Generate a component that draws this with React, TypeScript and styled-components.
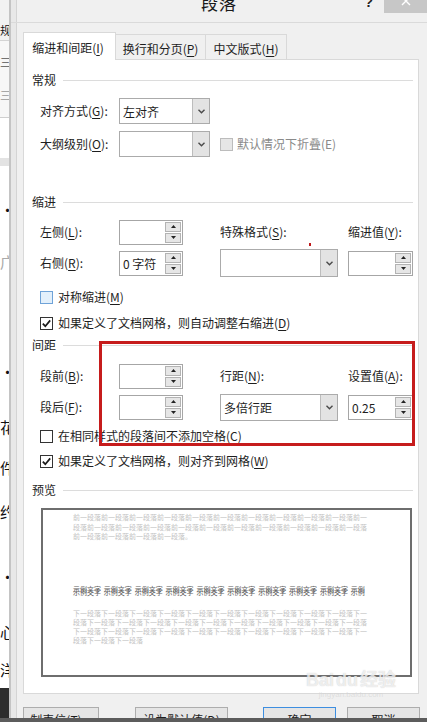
import React from "react";
import styled, { createGlobalStyle, css } from "styled-components";

const FONT = `"Noto Sans CJK SC", "Noto Sans", "Liberation Sans", sans-serif`;

const GlobalStyle = createGlobalStyle`
  * { box-sizing: border-box; }
  html, body { margin: 0; padding: 0; background: #f0f0f0; }
  body { font-family: ${FONT}; font-size: 12px; color: #1e1e1e; }
`;

const Root = styled.div`
  position: relative;
  width: 427px;
  height: 722px;
  overflow: hidden;
  display: grid;
  grid-template-rows: 718px 4px;
`;

const Main = styled.div`
  display: flex;
  overflow: hidden;
  min-height: 0;
`;

const BottomBand = styled.div`
  background: #5c5c5c;
`;

/* ---------- background document strip ---------- */
const DocStrip = styled.div`
  width: 9px;
  flex: none;
  display: flex;
  flex-direction: column;
  overflow: hidden;
`;

const DocSeg = styled.div<{ $h: number; $bg: string; $border?: string }>`
  flex: none;
  height: ${(p) => p.$h}px;
  background: ${(p) => p.$bg};
  border-bottom: ${(p) => (p.$border ? `1px solid ${p.$border}` : "0")};
  display: flex;
  flex-direction: column;
  overflow: hidden;
`;

const DocLine = styled.div<{ $mt: number; $size?: number; $color?: string }>`
  flex: none;
  margin-top: ${(p) => p.$mt}px;
  height: 20px;
  line-height: 20px;
  font-size: ${(p) => p.$size ?? 15}px;
  color: ${(p) => p.$color ?? "#111"};
  white-space: nowrap;
  letter-spacing: -2px;
`;

/* ---------- dialog frame ---------- */
const Dialog = styled.div`
  flex: 1;
  display: flex;
  flex-direction: column;
  background: #f0f0f0;
  border-left: 2px solid #c4c4c4;
  box-shadow: inset 5px 0 0 #e8e8e8, inset 6px 0 0 #d4d4d4;
  min-width: 0;
`;

const TitleBar = styled.div`
  flex: none;
  height: 23px;
  border-bottom: 1px solid #dadada;
  display: grid;
  grid-template-columns: 1fr auto 1fr;
  align-items: start;
  overflow: hidden;
`;

const Title = styled.div`
  grid-column: 2;
  font-size: 17px;
  line-height: 18px;
  margin-top: -6px;
  color: #1a1a1a;
  letter-spacing: 1px;
`;

const TitleControls = styled.div`
  grid-column: 3;
  justify-self: end;
  display: flex;
  align-items: flex-start;
`;

const HelpMark = styled.div`
  font-family: "Liberation Sans", sans-serif;
  font-size: 14px;
  font-weight: bold;
  line-height: 14px;
  margin-top: -5px;
  margin-right: 11px;
  color: #222;
`;

const CloseButton = styled.div`
  width: 43px;
  height: 13px;
  background: #c7c7c7;
  display: flex;
  justify-content: center;
  align-items: flex-start;
  overflow: hidden;
`;

const Body = styled.div`
  flex: 1;
  display: flex;
  flex-direction: column;
  padding: 9px 8px 0 12px;
`;

/* ---------- tabs ---------- */
const TabRow = styled.div`
  display: flex;
  align-items: flex-end;
  height: 27px;
`;

const Tab = styled.div<{ $active?: boolean; $w: number }>`
  width: ${(p) => p.$w}px;
  display: flex;
  justify-content: center;
  align-items: center;
  padding-top: 3px;
  border: 1px solid #d9d9d9;
  border-bottom: 0;
  white-space: nowrap;
  & + & {
    margin-left: -1px;
  }
  ${(p) =>
    p.$active
      ? css`
          height: 28px;
          margin-bottom: -1px;
          background: #fff;
          position: relative;
          z-index: 2;
          padding-top: 1px;
          padding-right: 3px;
        `
      : css`
          height: 25px;
          background: #f0f0f0;
        `}
`;

const Mn = styled.span`
  text-decoration: underline;
  text-underline-offset: 2px;
  text-decoration-thickness: 1px;
`;

/* ---------- panel ---------- */
const Panel = styled.div`
  height: 635px;
  border: 1px solid #d9d9d9;
  background: #fff;
  display: flex;
  flex-direction: column;
`;

const SectionHeader = styled.div<{ $mt: number }>`
  display: flex;
  align-items: center;
  gap: 7px;
  height: 16px;
  line-height: 16px;
  margin-top: ${(p) => p.$mt}px;
  padding: 0 5px 0 8px;
  color: #1e1e1e;
  &::after {
    content: "";
    flex: 1;
    height: 1px;
    background: #dcdcdc;
  }
`;

const GeneralRow = styled.div<{ $mt: number }>`
  display: grid;
  grid-template-columns: 79px 91px 10px auto;
  align-items: center;
  height: 26px;
  margin-top: ${(p) => p.$mt}px;
  padding-left: 16px;
`;

const FieldGrid = styled.div<{ $mt: number }>`
  display: grid;
  grid-template-columns: 79px 64px 37px 118px 10px 65px;
  grid-template-rows: 26px 26px;
  row-gap: 5px;
  align-items: center;
  margin-top: ${(p) => p.$mt}px;
  padding-left: 16px;
`;

const Cell = styled.div<{ $col: number; $row?: number }>`
  grid-column: ${(p) => p.$col};
  grid-row: ${(p) => p.$row ?? "auto"};
  white-space: nowrap;
  display: flex;
  align-items: center;
`;

const Label = styled.span<{ $disabled?: boolean }>`
  white-space: nowrap;
  line-height: 16px;
  color: ${(p) => (p.$disabled ? "#8a8a8a" : "#1e1e1e")};
`;

const SelectBox = styled.div<{ $w: number; $h?: number }>`
  width: ${(p) => p.$w}px;
  height: ${(p) => p.$h ?? 26}px;
  border: 1px solid #ababab;
  background: #fff;
  display: flex;
  align-items: stretch;
`;

const SelectText = styled.div`
  flex: 1;
  display: flex;
  align-items: center;
  padding-left: 3px;
  white-space: nowrap;
`;

const SelectArrow = styled.div`
  width: 17px;
  flex: none;
  background: #e3e3e3;
  border-left: 1px solid #bdbdbd;
  display: flex;
  align-items: center;
  justify-content: center;
`;

const SpinBox = styled.div<{ $w: number }>`
  width: ${(p) => p.$w}px;
  height: 25px;
  border: 1px solid #a6a6a6;
  background: #fff;
  display: flex;
  padding: 1px;
`;

const SpinText = styled.div`
  flex: 1;
  display: flex;
  align-items: center;
  padding-left: 2px;
  white-space: nowrap;
`;

const SpinButtons = styled.div`
  width: 16px;
  flex: none;
  display: flex;
  flex-direction: column;
  gap: 1px;
`;

const SpinBtn = styled.div`
  flex: 1;
  background: #e6e6e6;
  border: 1px solid #b3b3b3;
  display: flex;
  align-items: center;
  justify-content: center;
`;

const CheckRow = styled.div<{ $mt: number }>`
  display: flex;
  align-items: center;
  gap: 5px;
  height: 18px;
  margin-top: ${(p) => p.$mt}px;
  padding-left: 16px;
  white-space: nowrap;
`;

type BoxKind = "checked" | "unchecked" | "hover" | "disabled";

const Box = styled.div<{ $kind: BoxKind }>`
  width: 13px;
  height: 13px;
  flex: none;
  display: flex;
  align-items: center;
  justify-content: center;
  ${(p) =>
    p.$kind === "hover"
      ? css`
          border: 1px solid #6fa3d8;
          background: #e3f0fb;
        `
      : p.$kind === "disabled"
      ? css`
          border: 1px solid #bcbcbc;
          background: #e6e6e6;
        `
      : css`
          border: 1px solid #333;
          background: #fff;
        `}
`;

/* ---------- preview ---------- */
const PreviewBox = styled.div`
  margin: 10px 0 0 17px;
  width: 371px;
  height: 169px;
  border: 2px solid #6e6e6e;
  background: #fff;
  padding: 3px 0 0 30px;
  display: flex;
  flex-direction: column;
  overflow: hidden;
`;

const PreviewPara = styled.div<{ $mt?: number; $lh: number; $color: string }>`
  margin-top: ${(p) => p.$mt ?? 0}px;
  font-size: 7px;
  line-height: ${(p) => p.$lh}px;
  color: ${(p) => p.$color};
  white-space: nowrap;
  word-spacing: 1.3px;
`;

/* ---------- bottom buttons ---------- */
const ButtonRow = styled.div`
  display: flex;
  margin-top: 13px;
`;

const Button = styled.div<{ $w: number; $ml: number; $primary?: boolean }>`
  width: ${(p) => p.$w}px;
  margin-left: ${(p) => p.$ml}px;
  height: 24px;
  flex: none;
  border: 1px solid ${(p) => (p.$primary ? "#3d8ee0" : "#adadad")};
  background: #e5e5e5;
  display: flex;
  align-items: center;
  justify-content: center;
  white-space: nowrap;
`;

/* ---------- overlays ---------- */
const RedFrame = styled.div`
  position: absolute;
  left: 99px;
  top: 341px;
  width: 316px;
  height: 105px;
  border: 3px solid #c61c1c;
  pointer-events: none;
`;

const RedDot = styled.div`
  position: absolute;
  left: 309px;
  top: 243px;
  width: 2px;
  height: 3px;
  background: #c0181b;
`;

const Watermark = styled.div`
  position: absolute;
  left: 306px;
  top: 670px;
  display: flex;
  flex-direction: column;
  align-items: center;
  pointer-events: none;
`;

const WatermarkMain = styled.div`
  display: flex;
  align-items: flex-end;
  gap: 2px;
  font-family: "Liberation Sans", ${FONT};
  font-size: 18px;
  font-weight: bold;
  line-height: 20px;
  color: rgba(255, 255, 255, 0.7);
  text-shadow: 0 0 1px rgba(150, 150, 150, 0.55);
`;

const WatermarkSub = styled.div`
  font-family: "Liberation Sans", sans-serif;
  font-size: 8px;
  line-height: 9px;
  color: rgba(210, 210, 210, 0.6);
`;

/* ---------- small drawings ---------- */
const Chevron = () => (
  <svg width="7" height="5" viewBox="0 0 7 5">
    <path d="M0.5 0.8 L3.5 3.8 L6.5 0.8" fill="none" stroke="#4a4a4a" strokeWidth="1.4" />
  </svg>
);

const TriUp = () => (
  <svg width="5" height="3" viewBox="0 0 5 3">
    <path d="M0 3 L2.5 0 L5 3 Z" fill="#222" />
  </svg>
);

const TriDown = () => (
  <svg width="5" height="3" viewBox="0 0 5 3">
    <path d="M0 0 L2.5 3 L5 0 Z" fill="#222" />
  </svg>
);

const CheckMark = () => (
  <svg width="11" height="11" viewBox="0 0 11 11">
    <path d="M1.8 5.6 L4.3 8.2 L9.2 2.4" fill="none" stroke="#1a1a1a" strokeWidth="1.7" />
  </svg>
);

const Select = ({ w, h, value }: { w: number; h?: number; value?: string }) => (
  <SelectBox $w={w} $h={h}>
    <SelectText>{value}</SelectText>
    <SelectArrow>
      <Chevron />
    </SelectArrow>
  </SelectBox>
);

const Spin = ({ w, value }: { w: number; value?: string }) => (
  <SpinBox $w={w}>
    <SpinText>{value}</SpinText>
    <SpinButtons>
      <SpinBtn>
        <TriUp />
      </SpinBtn>
      <SpinBtn>
        <TriDown />
      </SpinBtn>
    </SpinButtons>
  </SpinBox>
);

const Check = ({ kind, mt, children }: { kind: BoxKind; mt: number; children: React.ReactNode }) => (
  <CheckRow $mt={mt}>
    <Box $kind={kind}>{kind === "checked" ? <CheckMark /> : null}</Box>
    <Label>{children}</Label>
  </CheckRow>
);

const prevLines = [
  "前一段落".repeat(10) + "前一",
  "段落前一".repeat(10) + "段落",
  "前一段落".repeat(4) + "。",
];
const sampleLine = "示例文字 ".repeat(9) + "示例";
const nextLines = [
  "下一段落".repeat(10) + "下一",
  "段落下一".repeat(10) + "段落",
  "下一段落".repeat(10) + "下一",
  "段落下一段落下一段落",
];

export default function App() {
  return (
    <>
      <GlobalStyle />
      <Root>
        <Main>
          <DocStrip>
            <DocSeg $h={41} $bg="#f2f2f2" $border="#d3d3d3">
              <DocLine $mt={20} $size={11}>
                规
              </DocLine>
            </DocSeg>
            <DocSeg $h={77} $bg="#f7f7f7" $border="#cfcfcf">
              <DocLine $mt={11} $size={11} $color="#555">
                三
              </DocLine>
              <DocLine $mt={13} $size={11} $color="#999">
                三
              </DocLine>
            </DocSeg>
            <DocSeg $h={40} $bg="#ffffff" />
            <DocSeg $h={8} $bg="#e3e3e3" />
            <DocSeg $h={522} $bg="#ffffff">
              <DocLine $mt={34}>•大</DocLine>
              <DocLine $mt={32} $color="#aaa">
                广
              </DocLine>
              <DocLine $mt={90}>•大</DocLine>
              <DocLine $mt={35}>花</DocLine>
              <DocLine $mt={21}>件</DocLine>
              <DocLine $mt={24}>约</DocLine>
              <DocLine $mt={45}>•大</DocLine>
              <DocLine $mt={35}>心</DocLine>
              <DocLine $mt={18}>洋</DocLine>
            </DocSeg>
            <DocSeg $h={30} $bg="#2d2d2d" />
          </DocStrip>

          <Dialog>
            <TitleBar>
              <Title>段落</Title>
              <TitleControls>
                <HelpMark>?</HelpMark>
                <CloseButton>
                  <svg width="10" height="10" viewBox="0 0 10 10" style={{ marginTop: -4 }}>
                    <path d="M1 1 L9 9 M9 1 L1 9" stroke="#fff" strokeWidth="1.4" />
                  </svg>
                </CloseButton>
              </TitleControls>
            </TitleBar>

            <Body>
              <TabRow>
                <Tab $active $w={93}>
                  缩进和间距(<Mn>I</Mn>)
                </Tab>
                <Tab $w={91}>
                  换行和分页(<Mn>P</Mn>)
                </Tab>
                <Tab $w={82}>
                  中文版式(<Mn>H</Mn>)
                </Tab>
              </TabRow>

              <Panel>
                <SectionHeader $mt={12}>常规</SectionHeader>
                <GeneralRow $mt={10}>
                  <Label>
                    对齐方式(<Mn>G</Mn>):
                  </Label>
                  <Select w={91} value="左对齐" />
                </GeneralRow>
                <GeneralRow $mt={7}>
                  <Label>
                    大纲级别(<Mn>O</Mn>):
                  </Label>
                  <Select w={91} />
                  <span />
                  <Cell $col={4}>
                    <Box $kind="disabled" />
                    <Label $disabled style={{ marginLeft: 4 }}>
                      默认情况下折叠(E)
                    </Label>
                  </Cell>
                </GeneralRow>

                <SectionHeader $mt={37}>缩进</SectionHeader>
                <FieldGrid $mt={9}>
                  <Cell $col={1} $row={1}>
                    <Label>
                      左侧(<Mn>L</Mn>):
                    </Label>
                  </Cell>
                  <Cell $col={2} $row={1}>
                    <Spin w={64} />
                  </Cell>
                  <Cell $col={4} $row={1}>
                    <Label>
                      特殊格式(<Mn>S</Mn>):
                    </Label>
                  </Cell>
                  <Cell $col={6} $row={1}>
                    <Label>
                      缩进值(<Mn>Y</Mn>):
                    </Label>
                  </Cell>
                  <Cell $col={1} $row={2}>
                    <Label>
                      右侧(<Mn>R</Mn>):
                    </Label>
                  </Cell>
                  <Cell $col={2} $row={2}>
                    <Spin w={64} value="0 字符" />
                  </Cell>
                  <Cell $col={4} $row={2}>
                    <Select w={118} h={28} />
                  </Cell>
                  <Cell $col={6} $row={2}>
                    <Spin w={65} />
                  </Cell>
                </FieldGrid>

                <Check kind="hover" mt={12}>
                  对称缩进(<Mn>M</Mn>)
                </Check>
                <Check kind="checked" mt={8}>
                  如果定义了文档网格，则自动调整右缩进(<Mn>D</Mn>)
                </Check>

                <SectionHeader $mt={5}>间距</SectionHeader>
                <FieldGrid $mt={10}>
                  <Cell $col={1} $row={1}>
                    <Label>
                      段前(<Mn>B</Mn>):
                    </Label>
                  </Cell>
                  <Cell $col={2} $row={1}>
                    <Spin w={64} />
                  </Cell>
                  <Cell $col={4} $row={1}>
                    <Label>
                      行距(<Mn>N</Mn>):
                    </Label>
                  </Cell>
                  <Cell $col={6} $row={1}>
                    <Label>
                      设置值(<Mn>A</Mn>):
                    </Label>
                  </Cell>
                  <Cell $col={1} $row={2}>
                    <Label>
                      段后(<Mn>F</Mn>):
                    </Label>
                  </Cell>
                  <Cell $col={2} $row={2}>
                    <Spin w={64} />
                  </Cell>
                  <Cell $col={4} $row={2}>
                    <Select w={118} h={27} value="多倍行距" />
                  </Cell>
                  <Cell $col={6} $row={2}>
                    <Spin w={65} value="0.25" />
                  </Cell>
                </FieldGrid>

                <Check kind="unchecked" mt={7}>
                  在相同样式的段落间不添加空格(<Mn>C</Mn>)
                </Check>
                <Check kind="checked" mt={7}>
                  如果定义了文档网格，则对齐到网格(<Mn>W</Mn>)
                </Check>

                <SectionHeader $mt={12}>预览</SectionHeader>
                <PreviewBox>
                  <PreviewPara $lh={9.5} $color="#c2c2c2">
                    {prevLines.map((l, i) => (
                      <div key={i}>{l}</div>
                    ))}
                  </PreviewPara>
                  <PreviewPara $mt={46} $lh={3} $color="#5e5e5e">
                    <div>{sampleLine}</div>
                    <div>{sampleLine}</div>
                  </PreviewPara>
                  <PreviewPara $mt={15} $lh={9} $color="#c2c2c2">
                    {nextLines.map((l, i) => (
                      <div key={i}>{l}</div>
                    ))}
                  </PreviewPara>
                </PreviewBox>
              </Panel>

              <ButtonRow>
                <Button $w={76} $ml={0}>
                  制表位(<Mn>T</Mn>)...
                </Button>
                <Button $w={93} $ml={36}>
                  设为默认值(<Mn>D</Mn>)
                </Button>
                <Button $w={73} $ml={35} $primary>
                  确定
                </Button>
                <Button $w={73} $ml={11}>
                  取消
                </Button>
              </ButtonRow>
            </Body>
          </Dialog>
        </Main>
        <BottomBand />
        <RedDot />
        <RedFrame />
        <Watermark>
          <WatermarkMain>
            <span>Bai</span>
            <span>du</span>
            <span>经验</span>
          </WatermarkMain>
          <WatermarkSub>jingyan.baidu.com</WatermarkSub>
        </Watermark>
      </Root>
    </>
  );
}
